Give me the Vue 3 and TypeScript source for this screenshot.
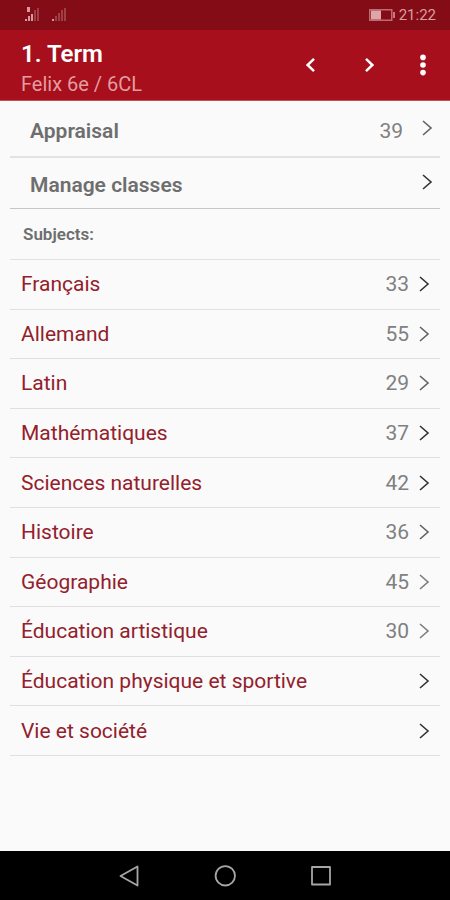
<script setup lang="ts">
type Tone = 'dark' | 'mid' | 'soft'

interface Subject {
  name: string
  points?: number
  tone: Tone
}

const subjects: Subject[] = [
  { name: 'Français', points: 33, tone: 'dark' },
  { name: 'Allemand', points: 55, tone: 'mid' },
  { name: 'Latin', points: 29, tone: 'mid' },
  { name: 'Mathématiques', points: 37, tone: 'dark' },
  { name: 'Sciences naturelles', points: 42, tone: 'dark' },
  { name: 'Histoire', points: 36, tone: 'mid' },
  { name: 'Géographie', points: 45, tone: 'soft' },
  { name: 'Éducation artistique', points: 30, tone: 'soft' },
  { name: 'Éducation physique et sportive', tone: 'dark' },
  { name: 'Vie et société', tone: 'dark' },
]
</script>

<template>
  <div class="screen">
    <div class="status">
      <svg class="signals" width="44" height="16" viewBox="0 0 44 16" aria-hidden="true">
        <g fill="#d69a9c">
          <rect x="1" y="12" width="2" height="2" />
          <rect x="3" y="0" width="3" height="5" />
          <rect x="4" y="9" width="2" height="5" />
          <rect x="7" y="7" width="2" height="7" />
        </g>
        <g fill="#9d3f47">
          <rect x="10" y="3" width="2" height="11" />
          <rect x="13" y="1" width="2" height="13" />
          <rect x="31" y="9" width="2" height="5" />
          <rect x="34" y="6" width="2" height="8" />
          <rect x="37" y="3" width="2" height="11" />
          <rect x="40" y="1" width="2" height="13" />
        </g>
        <rect x="28" y="12" width="2" height="2" fill="#d69498" />
      </svg>
      <div class="power">
        <svg width="26" height="12" viewBox="0 0 26 12" aria-hidden="true">
          <rect x="0.75" y="0.75" width="22" height="10.5" fill="none" stroke="#bd6c71" stroke-width="1.5" />
          <rect x="2" y="1.5" width="10" height="9" fill="#dfa6a9" />
          <rect x="24" y="3" width="2" height="6" fill="#c4777c" />
        </svg>
        <span class="clock">21:22</span>
      </div>
    </div>

    <header class="bar">
      <div class="titles">
        <h1>1. Term</h1>
        <p>Felix 6e / 6CL</p>
      </div>
      <button type="button" class="step" aria-label="Previous term">
        <svg width="12" height="16" viewBox="0 0 12 16"><path d="M10 1.8L3.6 8l6.4 6.2" fill="none" stroke="#fff" stroke-width="2.5" /></svg>
      </button>
      <button type="button" class="step" aria-label="Next term">
        <svg width="12" height="16" viewBox="0 0 12 16"><path d="M2 1.8L8.4 8 2 14.2" fill="none" stroke="#fff" stroke-width="2.5" /></svg>
      </button>
      <button type="button" class="more" aria-label="More options">
        <svg width="6" height="22" viewBox="0 0 6 22" fill="#fff"><circle cx="3" cy="3.4" r="2.8" /><circle cx="3" cy="11" r="2.8" /><circle cx="3" cy="18.6" r="2.8" /></svg>
      </button>
    </header>

    <main class="content">
      <a href="#appraisal" class="top thick">
        <span class="label">Appraisal</span>
        <span class="points">39</span>
        <svg class="chevron mid" width="12" height="16" viewBox="0 0 12 16"><path d="M2 1l8 7-8 7" /></svg>
      </a>
      <a href="#classes" class="top">
        <span class="label">Manage classes</span>
        <svg class="chevron dark" width="12" height="16" viewBox="0 0 12 16"><path d="M2 1l8 7-8 7" /></svg>
      </a>
      <h2>Subjects:</h2>
      <ul class="subjects">
        <li v-for="subject in subjects" :key="subject.name">
          <a href="#subject" class="subject">
            <span class="label">{{ subject.name }}</span>
            <span v-if="subject.points" class="points">{{ subject.points }}</span>
            <svg class="chevron" :class="subject.tone" width="12" height="16" viewBox="0 0 12 16"><path d="M2 1l8 7-8 7" /></svg>
          </a>
        </li>
      </ul>
    </main>

    <nav class="keys">
      <button type="button" aria-label="Back">
        <svg width="22" height="22" viewBox="0 0 22 22"><path d="M19.5 1.5v19L2.5 11z" /></svg>
      </button>
      <button type="button" aria-label="Home">
        <svg width="22" height="22" viewBox="0 0 22 22"><circle cx="11.3" cy="10.8" r="9.7" /></svg>
      </button>
      <button type="button" aria-label="Recent apps">
        <svg width="22" height="22" viewBox="0 0 22 22"><rect x="2" y="2" width="18" height="17.5" /></svg>
      </button>
    </nav>
  </div>
</template>

<style>
body {
  background: #fafafa;
}
</style>

<style scoped>
.screen {
  display: flex;
  flex-direction: column;
  min-height: 100vh;
  background: #fafafa;
  color: #6e6e6e;
  font-family: Roboto, "Liberation Sans", sans-serif;
}

h1,
h2,
p,
ul {
  margin: 0;
  padding: 0;
}

button {
  display: flex;
  align-items: center;
  justify-content: center;
  padding: 0;
  border: 0;
  background: none;
}

a {
  color: inherit;
  text-decoration: none;
}

.status {
  display: flex;
  align-items: center;
  justify-content: space-between;
  height: 30px;
  padding: 0 14px 0 24px;
  background: #840c16;
}

.power {
  display: flex;
  align-items: center;
  gap: 4px;
}

.clock {
  color: #d99da0;
  font-size: 15px;
  line-height: 32px;
}

.bar {
  display: flex;
  align-items: center;
  height: 70px;
  padding-right: 8px;
  padding-left: 21px;
  border-bottom: 1px solid #bd5059;
  background: #a60f1b;
}

.titles {
  flex: 1;
  padding-top: 6px;
}

h1 {
  color: #fff;
  font-size: 24px;
  font-weight: 600;
  line-height: 32px;
}

.titles p {
  color: #e39da0;
  font-size: 20px;
  line-height: 28px;
}

.step {
  width: 60px;
  height: 48px;
}

.more {
  width: 38px;
  height: 48px;
  margin-left: 4px;
}

.content {
  flex: 1;
  padding: 0 10px;
}

.top {
  display: flex;
  align-items: center;
  height: 50px;
  padding: 0 7px 0 20px;
  border-bottom: 1px solid #c6c6c6;
  font-size: 21px;
}

.top.thick {
  height: 55px;
  border-bottom: 2px solid #e2e2e2;
}

.top .label {
  font-weight: 600;
}

.top .label,
.top .points {
  padding-top: 4px;
}

.top .chevron {
  margin-bottom: 2px;
}

.label {
  flex: 1;
}

.top .points {
  margin-right: 18px;
}

.points {
  margin-right: 9px;
  color: #808080;
  font-size: 21px;
}

h2 {
  padding-left: 13px;
  border-bottom: 1px solid #e2e2e2;
  font-size: 17px;
  font-weight: 600;
  line-height: 50px;
}

.subjects {
  display: grid;
  grid-auto-rows: 1fr;
  min-height: 496px;
  list-style: none;
}

.subjects li {
  display: grid;
  border-bottom: 1px solid #e0e0e0;
}

.subject {
  display: flex;
  align-items: center;
  padding: 0 10px 0 11px;
  color: #93202b;
  font-size: 21px;
}

.chevron {
  fill: none;
  stroke-width: 1.6;
}

.dark {
  stroke: #333;
}

.mid {
  stroke: #626262;
}

.soft {
  stroke: #7c7c7c;
}

.keys {
  display: flex;
  justify-content: center;
  gap: 48px;
  height: 49px;
  background: #000;
}

.keys button {
  width: 48px;
}

.keys svg {
  fill: none;
  stroke: #a6a6a6;
  stroke-width: 1.8;
  stroke-linejoin: round;
}
</style>
